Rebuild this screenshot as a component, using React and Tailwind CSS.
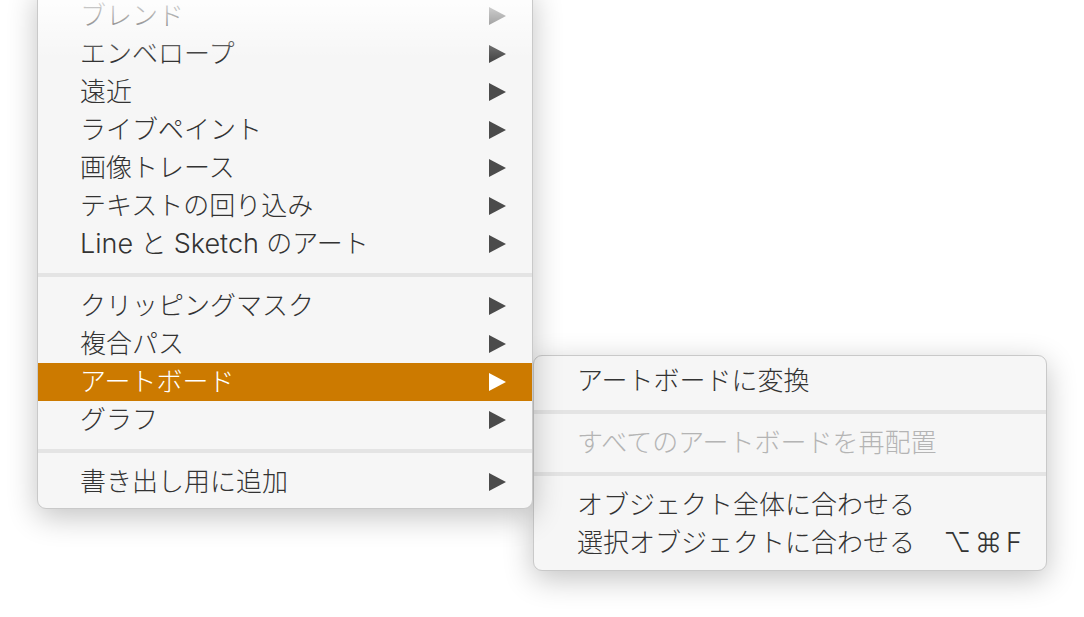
import React from "react";

const font = { fontFamily: 'Inter, "Noto Sans CJK JP", sans-serif' };

function Arrow({ white }) {
  return (
    <svg width="18" height="18" viewBox="0 0 18 18" className="shrink-0">
      <polygon points="0,0 17,9 0,18" fill={white ? "#ffffff" : "#4b4b4b"} />
    </svg>
  );
}

function Item({ label, active, sub = true }) {
  return (
    <div
      className={
        "flex h-[38px] items-center justify-between pl-[42px] pr-[25px] text-[26px] font-light leading-[38px] " +
        (active ? "bg-[#cc7a00] text-white" : "text-[#333333]")
      }
    >
      <span className="whitespace-nowrap">{label}</span>
      {sub && <Arrow white={active} />}
    </div>
  );
}

function Sep() {
  return (
    <div className="py-[10px]">
      <div className="h-[4px] bg-[#e4e4e4]" />
    </div>
  );
}

function SubItem({ label, disabled, shortcut }) {
  return (
    <div
      className={
        "flex h-[38px] items-center justify-between pl-[43px] pr-[24px] text-[26px] font-light leading-[38px] " +
        (disabled ? "text-[#b4b4b4]" : "text-[#333333]")
      }
    >
      <span className="whitespace-nowrap">{label}</span>
      {shortcut && <span className="mr-[-4px] whitespace-nowrap tracking-[4px] text-[27px]">{shortcut}</span>}
    </div>
  );
}

export default function App() {
  return (
    <div className="h-[617px] w-[1084px] overflow-hidden bg-white" style={font}>
      <div className="flex items-start pl-[37px]">
        <div className="relative mt-[-12px] w-[496px] rounded-b-[9px] border border-[#c9c9c9] bg-[#f6f6f6] pt-[8px] pb-[7px] shadow-[0_8px_30px_rgba(0,0,0,0.24)]">
          <Item label="ブレンド" />
          <Item label="エンベロープ" />
          <Item label="遠近" />
          <Item label="ライブペイント" />
          <Item label="画像トレース" />
          <Item label="テキストの回り込み" />
          <Item
            label={
              <>
                <span className="text-[27px]">Line</span> と <span className="text-[27px]">Sketch</span> のアート
              </>
            }
          />
          <Sep />
          <Item label="クリッピングマスク" />
          <Item label="複合パス" />
          <Item label="アートボード" active />
          <Item label="グラフ" />
          <Sep />
          <Item label="書き出し用に追加" />
          <div className="pointer-events-none absolute left-0 right-0 top-0 h-[70px] bg-gradient-to-b from-[rgba(255,255,255,0.96)] via-[rgba(255,255,255,0.5)] to-[rgba(255,255,255,0)]" />
        </div>
        <div className="mt-[355px] w-[514px] rounded-[9px] border border-[#c9c9c9] bg-[#f6f6f6] pt-[6px] pb-[8px] shadow-[0_8px_30px_rgba(0,0,0,0.24)]">
          <SubItem label="アートボードに変換" />
          <Sep />
          <SubItem label="すべてのアートボードを再配置" disabled />
          <Sep />
          <SubItem label="オブジェクト全体に合わせる" />
          <SubItem label="選択オブジェクトに合わせる" shortcut="⌥⌘F" />
        </div>
      </div>
    </div>
  );
}
